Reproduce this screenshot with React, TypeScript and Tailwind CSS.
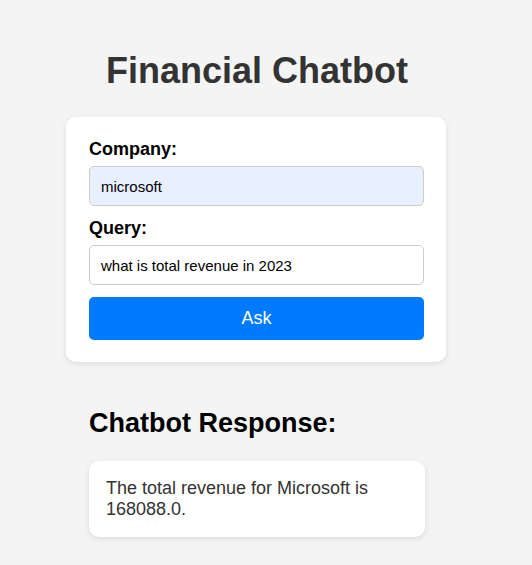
import { useState } from 'react';

export default function App() {
  const [company, setCompany] = useState('microsoft');
  const [query, setQuery] = useState('what is total revenue in 2023');

  return (
    <main className="min-h-screen bg-[#f4f4f4] font-['Liberation_Sans',Arial,sans-serif]">
      <div className="w-[514px] pt-[50px]">
        <h1 className="text-center text-[36px] font-bold leading-[41px] text-[#333]">Financial Chatbot</h1>

        {/* Form card */}
        <div className="ml-[66px] mt-[26px] w-[380px] rounded-[10px] bg-white pb-[22px] pl-[23px] pr-[22px] pt-[22px] shadow-[0_2px_6px_rgba(0,0,0,0.1)]">
          <label className="mb-[6px] block text-[18px] font-bold leading-[21px] text-black">Company:</label>
          <input
            value={company}
            onChange={e => setCompany(e.target.value)}
            className="mb-[12px] block h-[40px] w-full rounded-[5px] border border-[#ccc] bg-[#e8f0fe] px-[11px] text-[15px] text-black outline-none"
          />
          <label className="mb-[6px] block text-[18px] font-bold leading-[21px] text-black">Query:</label>
          <input
            value={query}
            onChange={e => setQuery(e.target.value)}
            className="mb-[12px] block h-[40px] w-full rounded-[5px] border border-[#ccc] bg-white px-[11px] text-[15px] text-black outline-none"
          />
          <button className="block h-[43px] w-full rounded-[5px] bg-[#007bff] text-[18px] text-white">Ask</button>
        </div>

        {/* Response */}
        <div className="ml-[89px] mt-[46px] w-[336px]">
          <h2 className="text-[27px] font-bold leading-[31px] text-black">Chatbot Response:</h2>
          <div className="mt-[22px] rounded-[10px] bg-white p-[17px] text-[18px] leading-[21px] text-[#333] shadow-[0_2px_6px_rgba(0,0,0,0.1)]">
            The total revenue for Microsoft is 168088.0.
          </div>
        </div>
      </div>
    </main>
  );
}
